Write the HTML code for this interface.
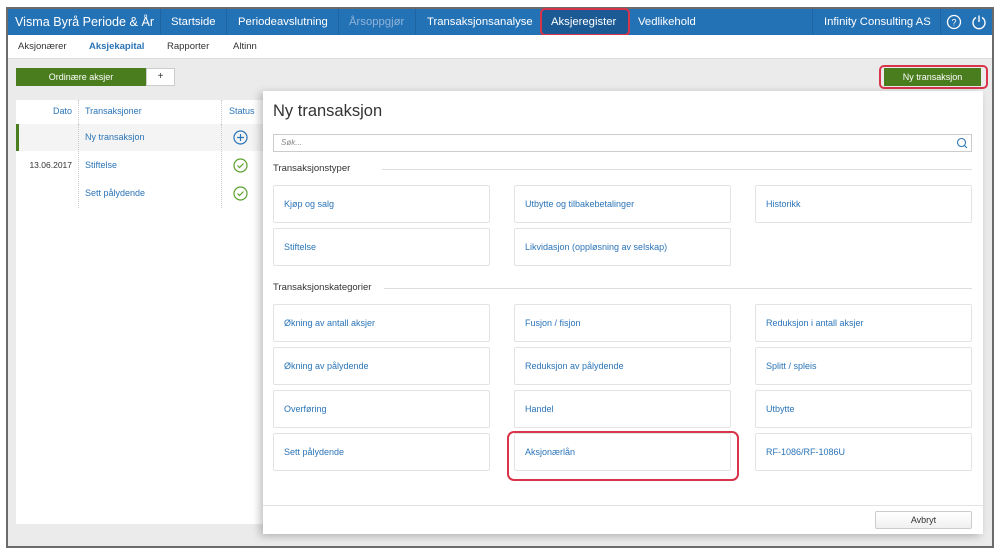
<!DOCTYPE html>
<html><head><meta charset="utf-8"><style>
*{box-sizing:border-box;margin:0;padding:0}
body{width:999px;height:552px;background:#fff;font-family:"Liberation Sans",sans-serif;position:relative;overflow:hidden;color:#333}
.a{position:absolute}
.frame{left:6px;top:7px;width:988px;height:541px;border:2px solid #6b6b6b;background:#ebebeb}
.nav{left:8px;top:9px;width:984px;height:26px;background:#2472b6}
.nt{position:absolute;top:0;line-height:26px;color:#fff;font-size:11.3px;white-space:nowrap}
.sep{position:absolute;top:0;width:1px;height:26px;background:#1e64a2}
.sub{left:8px;top:35px;width:984px;height:24px;background:#fff;border-bottom:1px solid #ddd}
.st{position:absolute;top:0;line-height:24px;font-size:9.5px;color:#333}
.card{position:absolute;width:217px;height:38px;background:#fff;border:1px solid #e3e3e3;border-radius:2px;font-size:9px;color:#2a74b8;padding-left:10px;line-height:36px}
.sec{position:absolute;font-size:9.5px;color:#333}
.line{position:absolute;height:1px;background:#ddd}
.tl{position:absolute;font-size:9px;color:#2a74b8}
.red{position:absolute;border:2.5px solid #d8344a;border-radius:5px}
</style></head><body>
<div class="a frame"></div>
<div class="a nav">
 <div class="nt" style="left:7px;font-size:12.6px">Visma Byrå Periode &amp; År</div>
 <div class="sep" style="left:152px"></div>
 <div class="nt" style="left:163px">Startside</div>
 <div class="sep" style="left:218px"></div>
 <div class="nt" style="left:230px">Periodeavslutning</div>
 <div class="sep" style="left:330px"></div>
 <div class="nt" style="left:341px;color:#8fb3d8">Årsoppgjør</div>
 <div class="sep" style="left:407px"></div>
 <div class="nt" style="left:419px">Transaksjonsanalyse</div>
 <div class="a" style="left:533px;top:0;width:88px;height:26px;background:#1b5a94"></div>
 <div class="nt" style="left:543px">Aksjeregister</div>
 <div class="nt" style="left:630px">Vedlikehold</div>
 <div class="sep" style="left:804px"></div>
 <div class="nt" style="left:816px">Infinity Consulting AS</div>
 <div class="sep" style="left:932px"></div>
 <svg class="a" style="left:938px;top:5px" width="16" height="16" viewBox="0 0 16 16"><circle cx="8" cy="8" r="6.5" fill="none" stroke="#fff" stroke-width="1.3"/><text x="8" y="11.5" font-size="9" fill="#fff" text-anchor="middle" font-family="Liberation Sans">?</text></svg>
 <svg class="a" style="left:963px;top:5px" width="16" height="16" viewBox="0 0 16 16"><path d="M5 3.5A6 6 0 1 0 11 3.5" fill="none" stroke="#fff" stroke-width="1.4"/><path d="M8 1.5V8" stroke="#fff" stroke-width="1.4"/></svg>
</div>
<div class="red" style="left:540px;top:8px;width:90px;height:28px"></div>
<div class="a sub">
 <div class="st" style="left:10px">Aksjonærer</div>
 <div class="st" style="left:81px;font-weight:bold;color:#2a74b8">Aksjekapital</div>
 <div class="st" style="left:159px">Rapporter</div>
 <div class="st" style="left:225px">Altinn</div>
</div>
<div class="a" style="left:16px;top:68px;width:130px;height:18px;background:#4a7d1e;color:#fff;font-size:9px;text-align:center;line-height:18px">Ordinære aksjer</div>
<div class="a" style="left:146px;top:68px;width:29px;height:18px;background:#fff;border:1px solid #ccc;font-size:10px;text-align:center;line-height:16px">+</div>
<div class="a" style="left:884px;top:68px;width:97px;height:18px;background:#4a7d1e;color:#fff;font-size:9px;text-align:center;line-height:18px">Ny transaksjon</div>
<div class="red" style="left:879px;top:65px;width:109px;height:24px"></div>
<div class="a" style="left:16px;top:100px;width:247px;height:424px;background:#fff"></div>
<div class="a" style="left:78px;top:100px;height:108px;border-left:1px dotted #ccc"></div>
<div class="a" style="left:221px;top:100px;height:108px;border-left:1px dotted #ccc"></div>
<div class="tl" style="left:20px;width:52px;text-align:right;top:106px">Dato</div>
<div class="tl" style="left:85px;top:106px">Transaksjoner</div>
<div class="tl" style="left:229px;top:106px">Status</div>
<div class="a" style="left:16px;top:124px;width:247px;height:27px;background:#f4f4f4"></div>
<div class="a" style="left:16px;top:124px;width:3px;height:27px;background:#4a7d1e"></div>
<div class="a" style="left:78px;top:124px;height:84px;border-left:1px dotted #ccc"></div>
<div class="a" style="left:221px;top:124px;height:84px;border-left:1px dotted #ccc"></div>
<div class="tl" style="left:85px;top:132px">Ny transaksjon</div>
<div class="tl" style="left:20px;width:52px;text-align:right;top:160px;color:#333;font-size:8.5px">13.06.2017</div>
<div class="tl" style="left:85px;top:160px">Stiftelse</div>
<div class="tl" style="left:85px;top:188px">Sett pålydende</div>
<svg class="a" style="left:233px;top:130px" width="15" height="15" viewBox="0 0 15 15"><circle cx="7.5" cy="7.5" r="6.5" fill="none" stroke="#2a74b8" stroke-width="1.2"/><path d="M7.5 4v7M4 7.5h7" stroke="#2a74b8" stroke-width="1.2"/></svg>
<svg class="a" style="left:233px;top:158px" width="15" height="15" viewBox="0 0 15 15"><circle cx="7.5" cy="7.5" r="6.5" fill="none" stroke="#5aa02c" stroke-width="1.2"/><path d="M4.5 7.5l2 2 4-4" fill="none" stroke="#5aa02c" stroke-width="1.2"/></svg>
<svg class="a" style="left:233px;top:186px" width="15" height="15" viewBox="0 0 15 15"><circle cx="7.5" cy="7.5" r="6.5" fill="none" stroke="#5aa02c" stroke-width="1.2"/><path d="M4.5 7.5l2 2 4-4" fill="none" stroke="#5aa02c" stroke-width="1.2"/></svg>
<div class="a" style="left:263px;top:91px;width:720px;height:443px;background:#fff;box-shadow:-3px 2px 8px rgba(0,0,0,.25)"></div>
<div class="a" style="left:273px;top:102px;font-size:16.5px;color:#333">Ny transaksjon</div>
<div class="a" style="left:273px;top:134px;width:699px;height:18px;border:1px solid #ccc;font-size:8px;font-style:italic;color:#888;padding-left:7px;line-height:16px">Søk...</div>
<svg class="a" style="left:956px;top:137px" width="12" height="12" viewBox="0 0 12 12"><circle cx="5.5" cy="5.5" r="4" fill="none" stroke="#2a74b8" stroke-width="1.1"/><path d="M8.5 8.5l2.5 2.5" stroke="#2a74b8" stroke-width="1.1"/></svg>
<div class="sec" style="left:273px;top:163px">Transaksjonstyper</div>
<div class="line" style="left:382px;top:169px;width:590px"></div>
<div class="card" style="left:273px;top:185px">Kjøp og salg</div>
<div class="card" style="left:514px;top:185px">Utbytte og tilbakebetalinger</div>
<div class="card" style="left:755px;top:185px">Historikk</div>
<div class="card" style="left:273px;top:228px">Stiftelse</div>
<div class="card" style="left:514px;top:228px">Likvidasjon (oppløsning av selskap)</div>
<div class="sec" style="left:273px;top:282px">Transaksjonskategorier</div>
<div class="line" style="left:384px;top:288px;width:588px"></div>
<div class="card" style="left:273px;top:304px">Økning av antall aksjer</div>
<div class="card" style="left:514px;top:304px">Fusjon / fisjon</div>
<div class="card" style="left:755px;top:304px">Reduksjon i antall aksjer</div>
<div class="card" style="left:273px;top:347px">Økning av pålydende</div>
<div class="card" style="left:514px;top:347px">Reduksjon av pålydende</div>
<div class="card" style="left:755px;top:347px">Splitt / spleis</div>
<div class="card" style="left:273px;top:390px">Overføring</div>
<div class="card" style="left:514px;top:390px">Handel</div>
<div class="card" style="left:755px;top:390px">Utbytte</div>
<div class="card" style="left:273px;top:433px">Sett pålydende</div>
<div class="card" style="left:514px;top:433px">Aksjonærlån</div>
<div class="card" style="left:755px;top:433px">RF-1086/RF-1086U</div>
<div class="red" style="left:507px;top:431px;width:232px;height:50px;border-radius:7px"></div>
<div class="line" style="left:263px;top:505px;width:720px;background:#e3e3e3"></div>
<div class="a" style="left:875px;top:511px;width:97px;height:18px;border:1px solid #ccc;border-radius:2px;background:linear-gradient(#fff,#f0f0f0);font-size:9px;text-align:center;line-height:16px">Avbryt</div>
</body></html>
